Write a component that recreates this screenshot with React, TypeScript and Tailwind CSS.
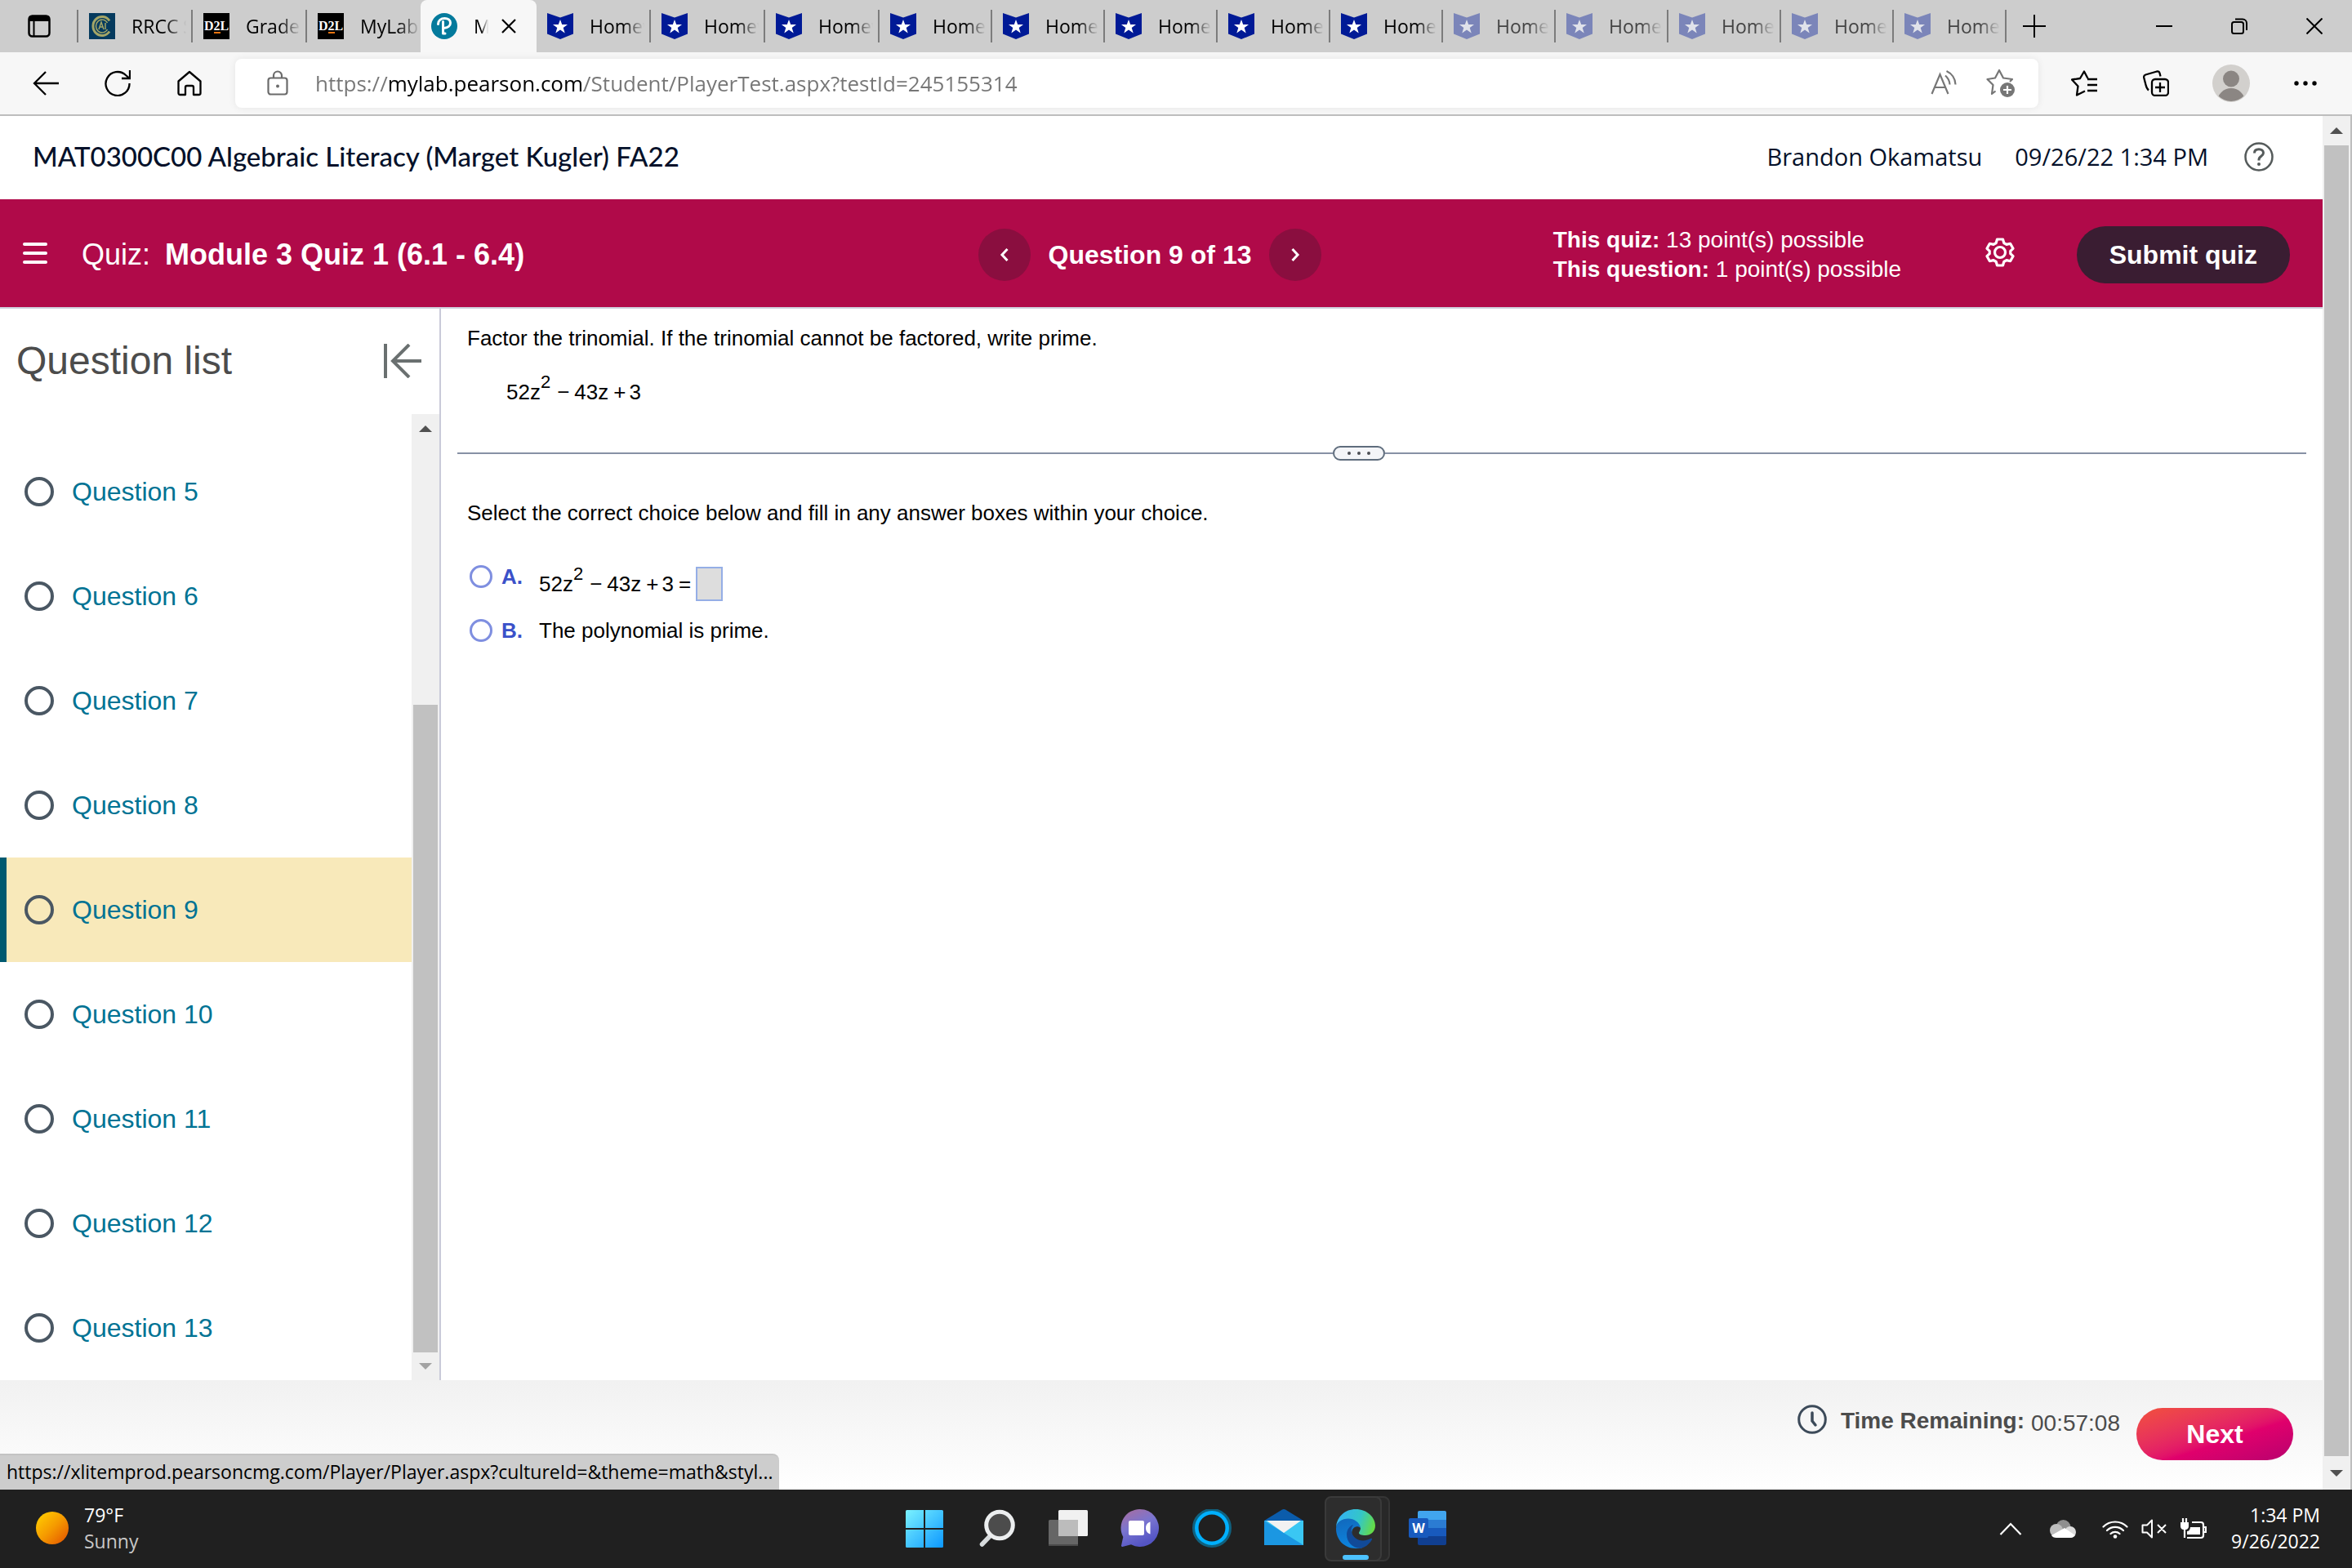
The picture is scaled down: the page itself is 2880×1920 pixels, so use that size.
import React, { useState } from 'react';

const OPEN_HOMEWORK_TABS = 8;
const TOTAL_HOMEWORK_TABS = 13;
const QUESTIONS = [5, 6, 7, 8, 9, 10, 11, 12, 13];

/* ---------- favicons ---------- */

function CollegeIcon() {
  return (
    <svg viewBox="0 0 32 32" className="size-8 shrink-0">
      <rect width="32" height="32" fill="#053a5e" />
      <g fill="none" stroke="#a3a567">
        <path d="M25 9.500A11 11.500 0 1 0 25 22.500" strokeWidth="3" />
        <path d="M22.500 12A7.500 8 0 1 0 22.500 20" strokeWidth="1.500" />
        <path d="M12 20l3-9 3 9M13 17h4M20 12v8" strokeWidth="1.500" />
      </g>
    </svg>
  );
}

function D2LIcon() {
  return (
    <span className="relative flex size-8 shrink-0 items-center justify-center overflow-hidden bg-black font-['Liberation_Serif',serif] text-[16px] font-bold leading-8 text-white">
      D2L
      <span className="absolute bottom-[7px] left-[13px] h-0.5 w-2 bg-[#e87511]" />
    </span>
  );
}

function PearsonIcon() {
  return (
    <svg viewBox="0 0 32 32" className="size-8 shrink-0">
      <circle cx="16" cy="16" r="16" fill="#047a9c" />
      <path
        d="M8.500 13.500C8.500 9 12 6.500 16.500 6.500c4 0 7 2 7 5.500 0 3.800-3.400 6-7 6.200M14.500 10.500V25M14.500 25h2.500"
        fill="none"
        stroke="#fff"
        strokeWidth="3"
        strokeLinecap="round"
      />
    </svg>
  );
}

function HomeworkIcon({ faded }: { faded: boolean }) {
  return (
    <svg viewBox="0 0 32 32" className="size-8 shrink-0">
      <path d="M0 0l16 5.500L32 0v25.500L16 32 0 25.500z" fill={faded ? '#7b85b9' : '#001a96'} />
      <path
        d="M16 8l2.200 6H25l-5.300 4 2 6.500L16 20.600l-5.700 3.900 2-6.500L7 14h6.800z"
        fill={faded ? '#e0e2ea' : '#fff'}
      />
    </svg>
  );
}

/* ---------- browser chrome ---------- */

function Tab({ icon, title, narrow, faded }: { icon: React.ReactNode; title: string; narrow?: boolean; faded?: boolean }) {
  return (
    <button className={`flex h-16 shrink-0 items-center pl-[13px] ${narrow ? 'w-[138px]' : 'w-[140px]'}`}>
      {icon}
      <span
        className={`ml-5 flex-1 overflow-hidden whitespace-nowrap text-left text-[23px] [mask-image:linear-gradient(to_right,black_62%,transparent)] ${
          faded ? 'text-[#444]' : 'text-black'
        }`}
      >
        {title}
      </span>
      <span className="ml-1.5 h-10 w-0.5 bg-[#7c7c7c]" />
    </button>
  );
}

function TabStrip() {
  return (
    <div className="flex h-16 items-center bg-[#cdcdcd]">
      <button aria-label="Tab actions" className="flex w-[94px] shrink-0 pl-[34px]">
        <svg viewBox="0 0 28 28" className="size-7">
          <rect x="1.500" y="1.500" width="25" height="25" rx="4" fill="none" stroke="#000" strokeWidth="2.500" />
          <path d="M1 8V5a4 4 0 0 1 4-4h18a4 4 0 0 1 4 4v3z" />
          <path d="M7.500 8v18" stroke="#000" strokeWidth="2" />
        </svg>
      </button>
      <span className="h-10 w-0.5 shrink-0 bg-[#7c7c7c]" />
      <Tab icon={<CollegeIcon />} title="RRCC S" />
      <Tab icon={<D2LIcon />} title="Grades" />
      <button className="flex h-16 w-[139px] shrink-0 items-center pl-[13px]">
        <D2LIcon />
        <span className="ml-5 flex-1 overflow-hidden whitespace-nowrap text-left text-[23px] [mask-image:linear-gradient(to_right,black_62%,transparent)]">
          MyLab
        </span>
      </button>
      <div className="flex h-16 w-[142px] shrink-0 items-center rounded-t-lg bg-[#f7f7f7] pl-[13px]">
        <PearsonIcon />
        <span className="ml-5 w-[18px] overflow-hidden whitespace-nowrap text-[23px] [mask-image:linear-gradient(to_right,black_50%,transparent)]">
          MyLab
        </span>
        <button aria-label="Close tab" className="ml-4">
          <svg viewBox="0 0 18 18" className="size-[18px]">
            <path d="M1 1l16 16M17 1L1 17" stroke="#000" strokeWidth="2.200" />
          </svg>
        </button>
      </div>
      {Array.from({ length: TOTAL_HOMEWORK_TABS }, (_, i) => (
        <Tab
          key={i}
          icon={<HomeworkIcon faded={i >= OPEN_HOMEWORK_TABS} />}
          title="Homework"
          narrow={i > 2}
          faded={i >= OPEN_HOMEWORK_TABS}
        />
      ))}
      <button aria-label="New tab" className="ml-5 shrink-0">
        <svg viewBox="0 0 28 28" className="size-7">
          <path d="M14 0v28M0 14h28" stroke="#000" strokeWidth="2" />
        </svg>
      </button>
      <div className="ml-auto flex items-center gap-[72px] pr-9">
        <button aria-label="Minimize">
          <svg viewBox="0 0 20 20" className="size-5">
            <path d="M0 10h20" stroke="#000" strokeWidth="2" />
          </svg>
        </button>
        <button aria-label="Restore">
          <svg viewBox="0 0 20 20" className="size-5" fill="none" stroke="#000" strokeWidth="2">
            <rect x="1" y="5" width="14" height="14" rx="2.500" />
            <path d="M5 1.500h9a5 5 0 0 1 5 5V15" />
          </svg>
        </button>
        <button aria-label="Close window">
          <svg viewBox="0 0 20 20" className="size-5">
            <path d="M.5.5l19 19M19.500.5l-19 19" stroke="#000" strokeWidth="2" />
          </svg>
        </button>
      </div>
    </div>
  );
}

function AddressBar() {
  const [url, setUrl] = useState('https://mylab.pearson.com/Student/PlayerTest.aspx?testId=245155314');
  return (
    <div className="flex h-[78px] items-center border-b-2 border-[#bdbdbd] bg-[#f7f7f7]">
      <div className="flex w-72 shrink-0 items-center gap-14 pl-10">
        <button aria-label="Back">
          <svg viewBox="0 0 32 32" className="size-8" fill="none" stroke="#000" strokeWidth="2.300">
            <path d="M32 16H2M16 2L2 16l14 14" />
          </svg>
        </button>
        <button aria-label="Refresh">
          <svg viewBox="0 0 32 32" className="size-8" fill="none" stroke="#000" strokeWidth="2.300">
            <path d="M30.500 16A14.500 14.500 0 1 1 26 6l4 3.500M31 0v10H21" />
          </svg>
        </button>
        <button aria-label="Home">
          <svg viewBox="0 0 32 32" className="size-8" fill="none" stroke="#000" strokeWidth="2.300" strokeLinejoin="round">
            <path d="M2.500 13.500L16 2l13.500 11.500V28a2 2 0 0 1-2 2H21v-9a2 2 0 0 0-2-2h-6a2 2 0 0 0-2 2v9H4.500a2 2 0 0 1-2-2z" />
          </svg>
        </button>
      </div>
      <div className="flex h-15 flex-1 items-center rounded-lg bg-white pl-9 shadow-[0_0_10px_rgba(0,0,0,0.08)]">
        <svg viewBox="0 0 32 32" className="size-8 shrink-0" fill="none" stroke="#6b6b6b" strokeWidth="2.200">
          <rect x="4.500" y="9.500" width="23" height="20" rx="3" />
          <path d="M11 9V6.500a5 5 0 0 1 10 0V9" />
          <circle cx="16" cy="19.500" r="2" fill="#6b6b6b" stroke="none" />
        </svg>
        {/* the gradient stops darken the host part of the url */}
        <input
          aria-label="Address"
          value={url}
          onChange={(e) => setUrl(e.target.value)}
          className="ml-[30px] flex-1 bg-[linear-gradient(to_right,#767676_89px,#000_89px,#000_329px,#767676_329px)] bg-clip-text text-[26px] text-transparent outline-none"
        />
        <div className="flex items-center gap-9 pr-7">
          <button aria-label="Read aloud">
            <svg viewBox="0 0 32 32" className="size-8" fill="none" stroke="#767676" strokeWidth="2.200">
              <path d="M1.500 29L11.500 5l10 24M5 21h13M18 6.500a16 16 0 0 1 5.500 11M19.500 1a19 19 0 0 1 11 16.500" />
            </svg>
          </button>
          <button aria-label="Add to favorites">
            <svg viewBox="0 0 36 36" className="size-9">
              <path
                d="M11.500 27.500L7 31l1.500-11L1.500 13l9.500-1.500L16 2l5 9.500L32 13l-3 3"
                fill="none"
                stroke="#767676"
                strokeWidth="2.200"
                strokeLinejoin="round"
              />
              <circle cx="26" cy="26" r="9" fill="#767676" />
              <path d="M26 21v10M21 26h10" stroke="#fff" strokeWidth="2.200" />
            </svg>
          </button>
        </div>
      </div>
      <div className="flex w-96 shrink-0 items-center pl-10">
        <button aria-label="Favorites">
          <svg viewBox="0 0 32 32" className="size-8" fill="none" stroke="#000" strokeWidth="2.300" strokeLinejoin="round">
            <path d="M17 25.500L7 30.500l1.500-11L1 11.500l10-1.500 5-8.500 4.500 8.500M20 11h12M20 18h12M20 25h12" />
          </svg>
        </button>
        <button aria-label="Collections" className="ml-14">
          <svg viewBox="0 0 32 32" className="size-8" fill="none" stroke="#000" strokeWidth="2.300">
            <path d="M7 24.500C5 23 4 20 3.500 18L1.200 9c-.3-2 .5-3 2-3.500L17 1.500c2-.4 3 .3 3.500 2l1 4" />
            <rect x="11" y="11" width="20" height="20" rx="4" />
            <path d="M21 15v12M15 21h12" />
          </svg>
        </button>
        <button aria-label="Profile" className="ml-[53px]">
          <svg viewBox="0 0 46 46" className="size-[46px]">
            <clipPath id="avatar">
              <circle cx="23" cy="23" r="22" />
            </clipPath>
            <circle cx="23" cy="23" r="23" fill="#d2d0cd" />
            <circle cx="23" cy="17.500" r="10" fill="#8b8683" />
            <circle cx="23" cy="46" r="17" fill="#8b8683" clipPath="url(#avatar)" />
          </svg>
        </button>
        <button aria-label="Settings and more" className="ml-[54px]">
          <svg viewBox="0 0 28 28" className="size-7">
            <circle cx="3" cy="14" r="2.700" />
            <circle cx="14" cy="14" r="2.700" />
            <circle cx="25" cy="14" r="2.700" />
          </svg>
        </button>
      </div>
    </div>
  );
}

/* ---------- quiz page ---------- */

function Arrow({ down, faint }: { down?: boolean; faint?: boolean }) {
  return (
    <svg viewBox="0 0 16 8" className="h-2 w-4">
      <path d={down ? 'M0 0h16L8 8z' : 'M0 8h16L8 0z'} fill={faint ? '#a3a3a3' : '#505050'} />
    </svg>
  );
}

function CourseHeader() {
  return (
    <header className="flex h-[102px] items-center bg-white pb-0.5 pl-10 pr-[60px] text-[#05112a]">
      <h1 className="font-['Lato',sans-serif] text-[33px] font-medium">MAT0300C00 Algebraic Literacy (Marget Kugler) FA22</h1>
      <span className="ml-auto text-[29px]">Brandon Okamatsu</span>
      <span className="ml-10 text-[29px]">09/26/22 1:34 PM</span>
      <button aria-label="Help" className="ml-11">
        <svg viewBox="0 0 36 36" className="size-9" fill="none" stroke="#555b5b" strokeWidth="2.500">
          <circle cx="18" cy="18" r="16.500" />
          <path d="M12.500 13.500c0-3 2.300-4.700 5.500-4.700s5.500 1.700 5.500 4.500c0 4.200-5.500 3.700-5.500 8.200v1" strokeWidth="3" />
          <circle cx="18" cy="27" r="2" fill="#555b5b" stroke="none" />
        </svg>
      </button>
    </header>
  );
}

function QuizBar() {
  return (
    <div className="grid h-[134px] grid-cols-[1fr_auto_1fr] items-center border-b-2 border-[#cfd0dc] bg-[#b00a49] pr-7 pt-1 text-white">
      <div className="flex items-center pl-7">
        <button aria-label="Menu" className="mb-1 flex w-[30px] flex-col gap-[7px]">
          <span className="h-1 rounded-full bg-white" />
          <span className="h-1 rounded-full bg-white" />
          <span className="h-1 rounded-full bg-white" />
        </button>
        <h2 className="ml-[42px] text-[36px] leading-none">
          Quiz: <b className="ml-2">Module 3 Quiz 1 (6.1 - 6.4)</b>
        </h2>
      </div>
      <nav className="flex items-center">
        <button aria-label="Previous question" className="flex size-16 items-center justify-center rounded-full bg-[#8a0e3f]">
          <svg viewBox="0 0 12 16" className="h-4 w-3" fill="none" stroke="#fff" strokeWidth="3">
            <path d="M9.500 1L3 8l6.500 7" />
          </svg>
        </button>
        <span className="px-[22px] text-[32px] font-bold">Question 9 of 13</span>
        <button aria-label="Next question" className="flex size-16 items-center justify-center rounded-full bg-[#8a0e3f]">
          <svg viewBox="0 0 12 16" className="h-4 w-3" fill="none" stroke="#fff" strokeWidth="3">
            <path d="M2.500 1L9 8l-6.500 7" />
          </svg>
        </button>
      </nav>
      <div className="flex items-center justify-end pr-3">
        <p className="w-[529px] text-[28px] leading-9">
          <b>This quiz:</b> 13 point(s) possible
          <br />
          <b>This question:</b> 1 point(s) possible
        </p>
        <button aria-label="Settings" className="mb-1.5">
          <svg viewBox="0 0 36 36" className="size-9" fill="none" stroke="#fff" strokeWidth="3.200" strokeLinejoin="round">
            <path d="M14.500 2h7l1.300 4.500 3.200 1.900 4.600-1.100 3.400 6-3.200 3v3.400l3.200 3-3.400 6-4.600-1.100-3.200 1.900L21.500 34h-7l-1.300-4.500L10 27.600l-4.600 1.100-3.400-6 3.200-3v-3.400L2 13.300l3.400-6L10 8.400l3.200-1.900z" />
            <circle cx="18" cy="18" r="6.500" />
          </svg>
        </button>
        <button className="ml-19 h-[70px] rounded-full bg-[#3a1d32] px-10 text-[32px] font-bold">Submit quiz</button>
      </div>
    </div>
  );
}

function QuestionList() {
  return (
    <aside className="flex w-[540px] shrink-0 flex-col border-r-2 border-[#c9cad9] bg-white">
      <div className="flex h-[129px] shrink-0 items-center justify-between pb-0.5 pl-5 pr-[22px]">
        <h2 className="text-[48px] text-[#4c4c4c]">Question list</h2>
        <button aria-label="Collapse question list">
          <svg viewBox="0 0 46 42" className="h-[42px] w-[46px]" fill="none" stroke="#6a7070" strokeWidth="4">
            <path d="M2 0v42M46 21H12M31 1L11 21l20 20" />
          </svg>
        </button>
      </div>
      <div className="flex flex-1">
        <ul className="flex flex-1 flex-col justify-end">
          {QUESTIONS.map((n) => (
            <li key={n}>
              <a
                href={`#question-${n}`}
                className={`flex h-32 items-center border-l-8 pl-[22px] text-[32px] text-[#007394] ${
                  n === 9 ? 'border-[#005a70] bg-[#f8e9ba]' : 'border-transparent'
                }`}
              >
                <span className="mr-[22px] size-9 rounded-full border-4 border-[#4a5763]" />
                Question {n}
              </a>
            </li>
          ))}
        </ul>
        <div className="flex w-[34px] flex-col items-center bg-[#f0f0f0]">
          <div className="flex h-9 items-center">
            <Arrow />
          </div>
          <div className="mt-80 w-[30px] flex-1 bg-[#c1c1c1]" />
          <div className="flex h-[34px] items-center">
            <Arrow down faint />
          </div>
        </div>
      </div>
    </aside>
  );
}

function Trinomial() {
  return (
    <span className="whitespace-nowrap">
      52z<sup className="top-0 align-[14px] text-[22px]">2</sup>
      <span className="ml-2 mr-1.5">−</span>43z<span className="ml-1.5 mr-1">+</span>3
    </span>
  );
}

function Choice({ id, letter, children }: { id: string; letter: string; children: React.ReactNode }) {
  return (
    <div className="flex items-start">
      <input
        type="radio"
        name="answer"
        id={id}
        className="mt-1 size-7 shrink-0 appearance-none rounded-full border-3 border-[#7f8fe0] checked:bg-[#3b51c9]"
      />
      <label htmlFor={id} className="flex items-start">
        <b className="ml-[11px] w-[46px] leading-9 text-[#3b51c9]">{letter}.</b>
        {children}
      </label>
    </div>
  );
}

function QuestionPanel() {
  return (
    <main className="flex-1 bg-white pl-5 pr-5 text-[26px] text-black">
      <p className="pl-3 pt-[18px] leading-9">Factor the trinomial. If the trinomial cannot be factored, write prime.</p>
      <p className="pl-15 pt-[30px] leading-9">
        <Trinomial />
      </p>
      <div className="mt-12 flex items-center">
        <span className="h-0.5 flex-1 bg-[#8791a5]" />
        <button
          aria-label="Resize panels"
          className="flex h-[18px] w-16 items-center justify-center gap-2 rounded-full border-2 border-[#5f6d7d] bg-[#f4f5f8]"
        >
          <span className="size-1 rounded-full bg-[#4c4f55]" />
          <span className="size-1 rounded-full bg-[#4c4f55]" />
          <span className="size-1 rounded-full bg-[#4c4f55]" />
        </button>
        <span className="h-0.5 w-[1128px] bg-[#8791a5]" />
      </div>
      <p className="pl-3 pt-[46px] leading-9">Select the correct choice below and fill in any answer boxes within your choice.</p>
      <div className="flex flex-col gap-[18px] pl-[15px] pt-[42px]">
        <Choice id="choice-a" letter="A">
          <span className="mt-1.5 flex h-[42px] items-center">
            <Trinomial />
            <span className="ml-1.5">=</span>
            <input aria-label="Answer" className="ml-1.5 h-[42px] w-[33px] border-2 border-[#95aee6] bg-[#dddddd]" />
          </span>
        </Choice>
        <Choice id="choice-b" letter="B">
          <span className="leading-9">The polynomial is prime.</span>
        </Choice>
      </div>
    </main>
  );
}

function QuizFooter() {
  return (
    <footer className="relative flex h-[134px] shrink-0 items-start justify-end bg-linear-to-b from-[#f1f1f1] to-white pr-9 pt-[30px] text-[28px] text-[#4c4c4c]">
      <svg viewBox="0 0 36 36" className="size-9" fill="none" stroke="#3c4a59" strokeLinecap="round">
        <circle cx="18" cy="18" r="16.300" strokeWidth="3" />
        <path d="M18 10v10l4 5" strokeWidth="3.500" />
      </svg>
      <b className="ml-[17px] mt-0.5 leading-9">Time Remaining:</b>
      <span className="ml-2 mt-[5px] leading-9">00:57:08</span>
      <button className="ml-5 mt-1 h-16 w-48 rounded-full bg-linear-to-br from-[#f2503a] via-[#e0006c] via-60% to-[#b8006e] text-[32px] font-bold text-white">
        Next
      </button>
      <div className="absolute bottom-0 left-0 h-11 rounded-tr-lg border-t-2 border-[#c4c4c4] bg-[#cdcdcd] px-2 font-['Open_Sans','Noto_Sans',sans-serif] text-[23px] leading-10 text-black">
        https://xlitemprod.pearsoncmg.com/Player/Player.aspx?cultureId=&amp;theme=math&amp;styl...
      </div>
    </footer>
  );
}

/* ---------- taskbar ---------- */

function StartIcon() {
  return (
    <svg viewBox="0 0 48 48" className="size-12">
      <linearGradient id="start" x1="0" y1="0" x2="48" y2="48" gradientUnits="userSpaceOnUse">
        <stop stopColor="#7df4ff" />
        <stop offset="1" stopColor="#0a96ff" />
      </linearGradient>
      <path
        fill="url(#start)"
        d="M2.500 1H23v22H1V2.500A1.500 1.500 0 0 1 2.500 1zM25 1h20.500A1.500 1.500 0 0 1 47 2.500V23H25zM1 25h22v22H2.500A1.500 1.500 0 0 1 1 45.500zM25 25h22v20.500a1.500 1.500 0 0 1-1.500 1.500H25z"
      />
    </svg>
  );
}

function SearchIcon() {
  return (
    <svg viewBox="0 0 48 48" className="size-12">
      <path d="M18 31L6.500 43" stroke="#d7dbdd" strokeWidth="5.500" strokeLinecap="round" />
      <circle cx="28" cy="19.500" r="16.300" fill="#4c4c4c" stroke="#eceeef" strokeWidth="5" />
    </svg>
  );
}

function TaskViewIcon() {
  return (
    <svg viewBox="0 0 48 48" className="size-12">
      <rect x="12" y="1" width="36" height="32" rx="1.500" fill="#f1f1f1" />
      <rect x="0" y="13" width="36" height="32" rx="1.500" fill="#666" />
      <path d="M12 13h24v20H12z" fill="#bcbcbc" />
      <path d="M0 43h36v1a1 1 0 0 1-1 1H1a1 1 0 0 1-1-1z" fill="#4b4b4b" />
    </svg>
  );
}

function ChatIcon() {
  return (
    <svg viewBox="0 0 48 48" className="size-12">
      <linearGradient id="chat" x1="6" y1="4" x2="24" y2="44" gradientUnits="userSpaceOnUse">
        <stop stopColor="#a06ea8" />
        <stop offset=".45" stopColor="#7a75d0" />
        <stop offset="1" stopColor="#5455c4" />
      </linearGradient>
      <path
        fill="url(#chat)"
        d="M24 0a23 23 0 1 1-11 43.200L2.500 46c-1 .2-1.700-.5-1.500-1.500L3.300 34A23 23 0 0 1 24 0z"
      />
      <rect x="10" y="14" width="19" height="18" rx="2" fill="#fff" />
      <path d="M36.500 15.500v15c-4-1.500-5.500-4-5.500-7.500s1.500-6 5.500-7.500z" fill="#fff" />
    </svg>
  );
}

function CortanaIcon() {
  return (
    <svg viewBox="0 0 48 48" className="size-12" fill="none">
      <circle cx="24" cy="23" r="21.500" stroke="#10617f" strokeWidth="5" />
      <circle cx="24" cy="23" r="18.700" stroke="#00b0ff" strokeWidth="4.500" />
    </svg>
  );
}

function MailIcon() {
  return (
    <svg viewBox="0 0 48 48" className="size-12">
      <path d="M0 14L22 .5c1.300-.7 2.700-.7 4 0L48 14v2H0z" fill="#0b5cab" />
      <path d="M0 14h48v30H0z" fill="#3ac7f3" />
      <path d="M0 14l48 30H0z" fill="#1b97e2" />
      <path d="M3 14h42L24 29z" fill="#f2f2f2" />
    </svg>
  );
}

function EdgeIcon() {
  return (
    <svg viewBox="0 0 48 48" className="size-12">
      <linearGradient id="edge-top" x1="4" y1="10" x2="46" y2="24" gradientUnits="userSpaceOnUse">
        <stop stopColor="#33b4ef" />
        <stop offset=".55" stopColor="#34c6c8" />
        <stop offset="1" stopColor="#66dc43" />
      </linearGradient>
      <linearGradient id="edge-body" x1="8" y1="12" x2="18" y2="48" gradientUnits="userSpaceOnUse">
        <stop stopColor="#1169bd" />
        <stop offset="1" stopColor="#0c86e0" />
      </linearGradient>
      <path d="M0 24C0 16 6 10 15 10c9 0 15 6 15 13-3-3-8-2-10 2-3 8 2 19 12 22.500-3 .5-5 .5-8 .5C10 48 0 37 0 24z" fill="url(#edge-body)" />
      <path d="M0 22C1 9 11 0 24 0c14 0 24 10 24 20 0 8-6 12-12 12-5 0-8-1-8-3 0-1 2-3 2-6-1-7-8-11.500-15-11.500C7 11.500 1 16 0 22z" fill="url(#edge-top)" />
      <path d="M13 31c0-6 4-11 8-12-2 3-3 6-2 9 1.500 6 7 10.500 14 10.500 4 0 7-1.500 9.500-2.700 1-.5 2 .2 1.500 1.200-3 6-9 10-14.500 11C20 47.500 13 40 13 31z" fill="#114a98" />
    </svg>
  );
}

function WordIcon() {
  return (
    <svg viewBox="0 0 48 48" className="size-12">
      <path d="M14 2h31a2 2 0 0 1 2 2v9H12V4a2 2 0 0 1 2-2z" fill="#41a5ee" />
      <path d="M12 13h35v10H12z" fill="#2b7cd3" />
      <path d="M12 23h35v10H12z" fill="#185abd" />
      <path d="M12 33h35v9a2 2 0 0 1-2 2H14a2 2 0 0 1-2-2z" fill="#103f91" />
      <rect x="1" y="11" width="24" height="24" rx="2" fill="#185abd" />
      <text x="13" y="29" textAnchor="middle" fontSize="16" fontWeight="700" fill="#fff" fontFamily="Open Sans, sans-serif">
        W
      </text>
    </svg>
  );
}

const PINNED_APPS = [
  { name: 'Start', icon: <StartIcon /> },
  { name: 'Search', icon: <SearchIcon /> },
  { name: 'Task view', icon: <TaskViewIcon /> },
  { name: 'Chat', icon: <ChatIcon /> },
  { name: 'Cortana', icon: <CortanaIcon /> },
  { name: 'Mail', icon: <MailIcon /> },
  { name: 'Edge', icon: <EdgeIcon />, active: true },
  { name: 'Word', icon: <WordIcon /> },
];

function Taskbar() {
  return (
    <div className="grid h-24 shrink-0 grid-cols-[1fr_auto_1fr] items-center bg-[#202020] text-[23px] leading-8 text-white">
      <button className="flex items-center pb-0.5 pl-11 text-left">
        <span className="size-10 rounded-full bg-linear-to-br from-[#ffd400] via-[#f59a00] to-[#e04a00]" />
        <span className="ml-[19px]">
          79°F
          <span className="block text-[#c8c8c8]">Sunny</span>
        </span>
      </button>
      <div className="flex">
        {PINNED_APPS.map((app) => (
          <button key={app.name} aria-label={app.name} className="relative flex h-24 w-22 items-center justify-center">
            {app.active && (
              <>
                <span className="absolute left-4 top-2 h-20 w-[70px] rounded-lg border-2 border-[#353535] bg-[#282828]" />
                <span className="absolute left-1.5 top-2 h-20 w-[70px] rounded-lg border-2 border-[#3a3a3a] bg-[#2d2d2d]" />
                <span className="absolute bottom-2.5 left-7 h-1.5 w-8 rounded-full bg-[#4cc2ff]" />
              </>
            )}
            <span className="relative">{app.icon}</span>
          </button>
        ))}
      </div>
      <div className="flex items-center justify-end pr-[39px]">
        <button aria-label="Show hidden icons">
          <svg viewBox="0 0 28 16" className="h-4 w-7" fill="none" stroke="#fff" strokeWidth="2.200">
            <path d="M1.500 15L14 2l12.500 13" />
          </svg>
        </button>
        <svg viewBox="0 0 32 22" className="ml-[34px] h-[22px] w-8">
          <circle cx="16.500" cy="9" r="9" fill="#8f8f8f" />
          <circle cx="8" cy="13" r="8" fill="#bdbdbd" />
          <circle cx="25" cy="15" r="7" fill="#dcdcdc" />
          <path d="M2 19L18 10l13 9c-1.500 2-3.500 3-6 3H8c-3 0-5-1-6-3z" fill="#fff" />
        </svg>
        <svg viewBox="0 0 32 24" className="ml-8 h-6 w-8" fill="none" stroke="#fff" strokeWidth="2.200" strokeLinecap="round">
          <path d="M1.500 9.500a20.500 20.500 0 0 1 29 0M6 14a14.200 14.200 0 0 1 20 0M10.500 18a8 8 0 0 1 11 0" />
          <circle cx="16" cy="21.500" r="2.300" fill="#fff" stroke="none" />
        </svg>
        <svg viewBox="0 0 32 24" className="ml-4 h-6 w-8" fill="none" stroke="#fff" strokeWidth="2" strokeLinejoin="round">
          <path d="M1.500 7.500H7l6-6v21l-6-6H1.500zM20 7l10 10M30 7L20 17" />
        </svg>
        <svg viewBox="0 0 32 26" className="ml-4 h-[26px] w-8" fill="none" stroke="#fff" strokeWidth="2.200">
          <path d="M14 5h11a3 3 0 0 1 3 3v13a3 3 0 0 1-3 3H8M28 11h3v6h-3M3 0v5M7 0v5" />
          <path d="M0 5h10v5c0 2.500-2 4-3.500 4h-3C2 14 0 12.500 0 10zM12 11h12v9H8v-4c2 0 4-2 4-5z" fill="#fff" stroke="none" />
          <path d="M5 13v11" />
        </svg>
        <button className="w-[139px] pb-0.5 text-right">
          1:34 PM
          <br />
          9/26/2022
        </button>
      </div>
    </div>
  );
}

export default function App() {
  return (
    <div className="flex min-h-screen flex-col bg-white font-['Open_Sans','Noto_Sans',sans-serif] text-black">
      <TabStrip />
      <AddressBar />
      <div className="flex flex-1">
        <div className="flex flex-1 flex-col">
          <CourseHeader />
          <div className="flex flex-1 flex-col font-['Liberation_Sans',Arial,sans-serif]">
            <QuizBar />
            <div className="flex flex-1">
              <QuestionList />
              <QuestionPanel />
            </div>
            <QuizFooter />
          </div>
        </div>
        <div className="flex w-9 flex-col items-center border-r-2 border-[#bdbdbd] bg-[#f0f0f0]">
          <div className="flex h-9 items-center">
            <Arrow />
          </div>
          <div className="w-[30px] flex-1 bg-[#c1c1c1]" />
          <div className="flex h-[41px] items-center">
            <Arrow down />
          </div>
        </div>
      </div>
      <Taskbar />
    </div>
  );
}
